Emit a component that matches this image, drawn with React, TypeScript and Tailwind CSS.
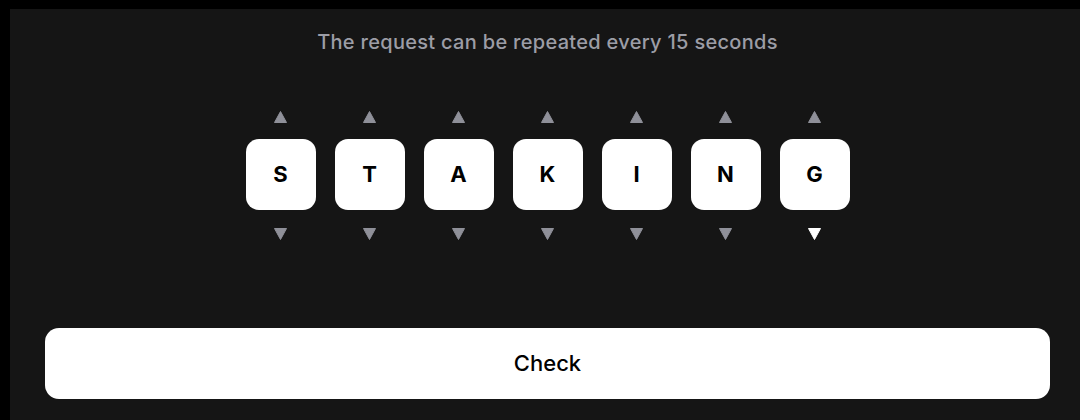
import React from "react";

const letters = ["S", "T", "A", "K", "I", "N", "G"];

function Arrow({ up, active }: { up?: boolean; active?: boolean }) {
  return (
    <svg width="13" height="12" viewBox="0 0 13 12" className="block">
      <path
        d={up ? "M6.5 0.5 L12.5 11.5 L0.5 11.5 Z" : "M0.5 0.5 L12.5 0.5 L6.5 11.5 Z"}
        fill={active ? "#ffffff" : "#8f9099"}
        stroke={active ? "#ffffff" : "#8f9099"}
        strokeLinejoin="round"
      />
    </svg>
  );
}

export default function App() {
  return (
    <div className="h-[420px] w-[1080px] overflow-hidden bg-black pl-[10px] pt-[9px]">
      <div className="flex h-full w-full flex-col bg-[#151515] pl-[35px] pr-[30px] pt-[20px] font-['Inter',sans-serif]">
        <p className="text-center text-[20px] font-medium leading-[26px] tracking-[0.3px] text-[#9c9da6]">
          The request can be repeated every 15 seconds
        </p>

        <div className="mt-[56px] flex justify-center gap-[19px]">
          {letters.map((l, i) => (
            <div key={i} className="flex flex-col items-center">
              <Arrow up />
              <div className="mt-[16px] flex h-[71px] w-[70px] items-center justify-center rounded-[13px] bg-white text-[22px] font-bold text-black">
                {l}
              </div>
              <div className="mt-[18px]">
                <Arrow active={i === letters.length - 1} />
              </div>
            </div>
          ))}
        </div>

        <button className="mt-[88px] flex h-[71px] w-full items-center justify-center rounded-[14px] bg-white text-[22px] font-medium text-black">
          Check
        </button>
      </div>
    </div>
  );
}
